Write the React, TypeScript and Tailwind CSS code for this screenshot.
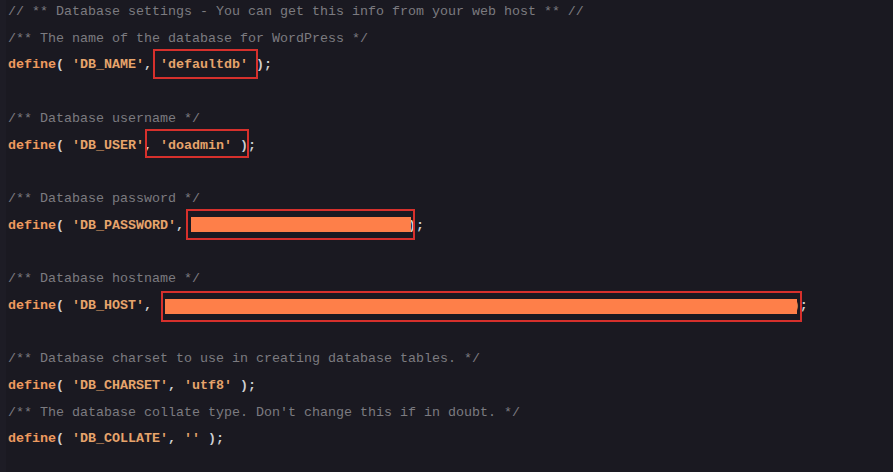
import React from "react";

type Line =
  | { kind: "comment"; text: string }
  | { kind: "blank" }
  | { kind: "define"; name: string; value?: string; tail?: string };

const lines: Line[] = [
  { kind: "comment", text: "// ** Database settings - You can get this info from your web host ** //" },
  { kind: "comment", text: "/** The name of the database for WordPress */" },
  { kind: "define", name: "DB_NAME", value: "'defaultdb'" },
  { kind: "blank" },
  { kind: "comment", text: "/** Database username */" },
  { kind: "define", name: "DB_USER", value: "'doadmin'" },
  { kind: "blank" },
  { kind: "comment", text: "/** Database password */" },
  { kind: "define", name: "DB_PASSWORD", tail: " ".repeat(27) + ");" },
  { kind: "blank" },
  { kind: "comment", text: "/** Database hostname */" },
  { kind: "define", name: "DB_HOST", tail: " ".repeat(79) + ");" },
  { kind: "blank" },
  { kind: "comment", text: "/** Database charset to use in creating database tables. */" },
  { kind: "define", name: "DB_CHARSET", value: "'utf8'" },
  { kind: "comment", text: "/** The database collate type. Don't change this if in doubt. */" },
  { kind: "define", name: "DB_COLLATE", value: "''" },
];

// annotation boxes drawn over the code
const boxes = [
  "left-[153px] top-[49px] w-[105px] h-[30px]",
  "left-[145px] top-[129px] w-[104px] h-[29px]",
  "left-[186px] top-[209px] w-[229px] h-[31px]",
  "left-[161px] top-[291px] w-[641px] h-[31px]",
];

const fills = [
  "left-[191px] top-[217px] w-[220px] h-[15px]",
  "left-[165px] top-[299px] w-[632px] h-[15px]",
];

const App: React.FC = () => {
  return (
    <div className="relative w-[893px] h-[472px] overflow-hidden bg-[#1a1921] font-['Liberation_Mono',monospace] text-[13.33px] leading-[26.7px]">
      <div className="absolute left-0 top-0 w-[6px] h-full bg-[#1d1c25]" />
      <div className="-mt-px pl-[8px] whitespace-pre">
        {lines.map((line, i) => {
          if (line.kind === "blank") return <div key={i}>&nbsp;</div>;
          if (line.kind === "comment")
            return (
              <div key={i} className="text-[#7c7b80]">
                {line.text}
              </div>
            );
          return (
            <div key={i} className="font-bold text-[#cfcfd2]">
              <span className="text-[#ee9a5f]">define</span>
              {"( "}
              <span className="text-[#e6a46c]">'{line.name}'</span>
              {", "}
              {line.value !== undefined ? (
                <>
                  <span className="text-[#e6a46c]">{line.value}</span>
                  {" );"}
                </>
              ) : (
                line.tail
              )}
            </div>
          );
        })}
      </div>
      {fills.map((f, i) => (
        <div key={i} className={`absolute bg-[#fe7f49] ${f}`} />
      ))}
      {boxes.map((b, i) => (
        <div key={i} className={`absolute border-2 border-[#d6302c] ${b}`} />
      ))}
    </div>
  );
};

export default App;
